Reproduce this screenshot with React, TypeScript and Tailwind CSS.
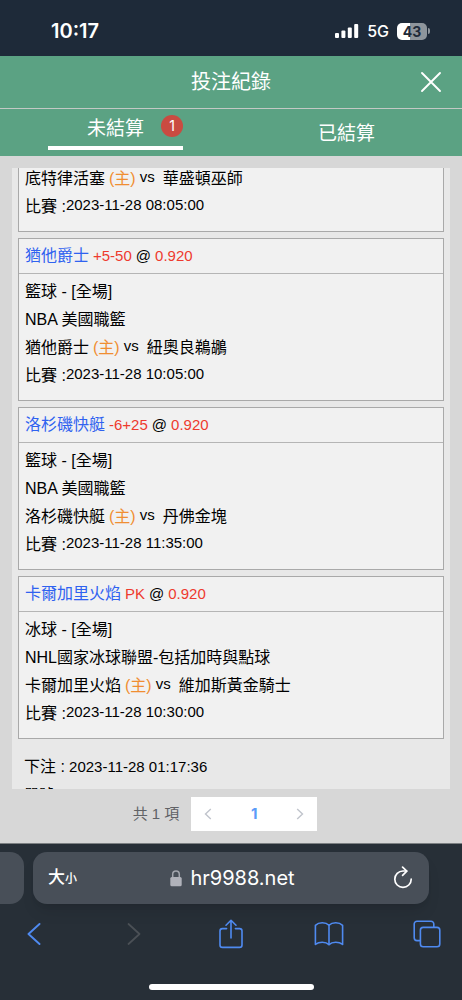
import React, { useState } from 'react';
import clsx from 'clsx';

type Bet = {
  id: number;
  pick?: string;
  line?: string;
  odds?: string;
  sport?: string;
  league?: string;
  home: string;
  away: string;
  startsAt: string;
};

const bets: Bet[] = [
  { id: 1, home: '底特律活塞', away: '華盛頓巫師', startsAt: '2023-11-28 08:05:00' },
  {
    id: 2,
    pick: '猶他爵士',
    line: '+5-50',
    odds: '0.920',
    sport: '籃球 - [全場]',
    league: 'NBA 美國職籃',
    home: '猶他爵士',
    away: '紐奧良鵜鶘',
    startsAt: '2023-11-28 10:05:00',
  },
  {
    id: 3,
    pick: '洛杉磯快艇',
    line: '-6+25',
    odds: '0.920',
    sport: '籃球 - [全場]',
    league: 'NBA 美國職籃',
    home: '洛杉磯快艇',
    away: '丹佛金塊',
    startsAt: '2023-11-28 11:35:00',
  },
  {
    id: 4,
    pick: '卡爾加里火焰',
    line: 'PK',
    odds: '0.920',
    sport: '冰球 - [全場]',
    league: 'NHL國家冰球聯盟-包括加時與點球',
    home: '卡爾加里火焰',
    away: '維加斯黃金騎士',
    startsAt: '2023-11-28 10:30:00',
  },
];

const StatusBar: React.FC = () => (
  <div className="flex h-14 shrink-0 items-center justify-between bg-[#1e2a39] pt-1.5 pr-8 pl-[51px] text-white">
    <span className="text-[20px] leading-6 font-semibold">10:17</span>
    <div className="flex items-center gap-2">
      <svg width="24" height="16" viewBox="0 0 24 16" fill="currentColor" aria-hidden="true">
        <rect x="0" y="10" width="4" height="5" rx="1" />
        <rect x="6.4" y="7.5" width="4" height="7.5" rx="1" />
        <rect x="12.8" y="4.5" width="4" height="10.5" rx="1" />
        <rect x="19.2" y="1" width="4" height="14" rx="1" />
      </svg>
      <span className="text-[16px] leading-6 font-medium">5G</span>
      <div className="flex items-center">
        <div className="h-[17px] w-[30px] rounded-[5px] bg-linear-to-r from-white from-43% to-[#8e959c] to-43% text-center text-[14px] leading-[17px] font-bold text-[#1e2a39]">
          43
        </div>
        <div className="ml-px h-1.5 w-0.5 rounded-r-full bg-[#8e959c]" />
      </div>
    </div>
  </div>
);

const BetCard: React.FC<{ bet: Bet }> = ({ bet }) => (
  <article className={clsx('border border-[#a9a9a9] bg-[#f1f1f1]', !bet.pick && 'border-t-0')}>
    {bet.pick && (
      <h2 className="flex h-[35px] items-center gap-1 border-b border-[#b5b5b5] px-1.5 text-[15px]">
        <span className="text-[16px] text-[#2f62f0]">{bet.pick}</span>
        <span className="text-[#ee3a2e]">{bet.line}</span>
        <span>@</span>
        <span className="text-[#ee3a2e]">{bet.odds}</span>
      </h2>
    )}
    <div className={clsx('px-1.5 pb-2.5 text-[16px] leading-7', bet.pick ? 'pt-1' : '-mt-[3px]')}>
      {bet.sport && <p>{bet.sport}</p>}
      {bet.league && <p>{bet.league}</p>}
      <p className="flex h-7">
        <span>{bet.home}</span>
        <span className="ml-1 text-[#f08e32]">(主)</span>
        <span className="mr-2 ml-1 text-[15px] leading-6">vs</span>
        <span>{bet.away}</span>
      </p>
      <p className="flex h-7">
        <span>比賽 :</span>
        <time className="text-[15px] leading-6">{bet.startsAt}</time>
      </p>
    </div>
  </article>
);

const BrowserBar: React.FC = () => (
  <footer className="shrink-0 border-t border-[#7c8082] bg-[#272f37] pt-2 text-white">
    <div className="flex gap-[9px] pr-[33px]">
      <div className="h-[52px] w-6 shrink-0 rounded-r-[14px] bg-[#484f58]" />
      <div className="flex h-[52px] flex-1 items-center justify-between rounded-[14px] bg-[#484f58] pr-4 pl-[15px] shadow-lg">
        <button type="button" aria-label="大小" className="flex w-8 items-baseline font-medium">
          <span className="text-[17px]">大</span>
          <span className="text-[12px]">小</span>
        </button>
        <a href="#" className="flex items-center gap-2 pl-1 text-[20px]">
          <svg width="12" height="17" viewBox="0 0 12 17" aria-hidden="true">
            <path d="M2.7 8V4.4a3.3 3.3 0 0 1 6.6 0V8" fill="none" stroke="#a3a6ae" strokeWidth="1.5" />
            <rect x="0.3" y="7" width="11.4" height="9.3" rx="1.6" fill="#b0b2ba" />
          </svg>
          hr9988.net
        </a>
        <button type="button" aria-label="重新載入" className="flex w-8 justify-end">
          <svg width="20" height="24" viewBox="0 0 20 24" fill="none" stroke="currentColor" strokeWidth="1.7" strokeLinecap="round" strokeLinejoin="round">
            <path d="M18.2 13.2a8.2 8.2 0 1 1-8.2-8.2h3.6" />
            <path d="M9.6 1.2l4.2 3.9-4.2 4.2" />
          </svg>
        </button>
      </div>
    </div>
    <nav className="mt-3 flex h-9 items-center justify-between pr-[21px] pl-[27px] text-[#4f8af0]">
      <button type="button" aria-label="上一頁">
        <svg width="14" height="22" viewBox="0 0 14 22" fill="none" stroke="currentColor" strokeWidth="1.9" strokeLinecap="round" strokeLinejoin="round">
          <path d="M12.5 1L1.500 11l11 10" />
        </svg>
      </button>
      <button type="button" aria-label="下一頁" disabled className="pl-4 text-[#4b5056]">
        <svg width="14" height="22" viewBox="0 0 14 22" fill="none" stroke="currentColor" strokeWidth="1.7" strokeLinecap="round" strokeLinejoin="round">
          <path d="M1.5 1l11 10-11 10" />
        </svg>
      </button>
      <button type="button" aria-label="分享" className="pl-2">
        <svg width="26" height="30" viewBox="0 0 26 30" fill="none" stroke="currentColor" strokeWidth="1.6" strokeLinecap="round" strokeLinejoin="round">
          <path d="M8.6 9.6H4.4a2.4 2.4 0 0 0-2.4 2.4v14a2.4 2.4 0 0 0 2.4 2.4h17.2A2.4 2.4 0 0 0 24 26V12a2.4 2.4 0 0 0-2.4-2.4h-4.2" />
          <path d="M13 19V1.4M8 6.2l5-4.9 5 4.9" />
        </svg>
      </button>
      <button type="button" aria-label="書籤">
        <svg width="30" height="26" viewBox="0 0 30 26" fill="none" stroke="currentColor" strokeWidth="1.6" strokeLinecap="round" strokeLinejoin="round">
          <path d="M15 4.2C13.4 2.6 11.2 1.8 8.3 1.8c-3.2 0-5.3 1-6.9 2.6v19c1.8-1.4 4.1-2.2 6.9-2.2 2.9 0 5.1.8 6.7 2.4 1.6-1.6 3.8-2.4 6.7-2.4 2.8 0 5.1.8 6.9 2.2v-19c-1.6-1.6-3.7-2.6-6.9-2.6-2.9 0-5.1.8-6.7 2.4z" />
          <path d="M15 4.2v19.2" />
        </svg>
      </button>
      <button type="button" aria-label="分頁">
        <svg width="28" height="28" viewBox="0 0 28 28" fill="none" stroke="currentColor" strokeWidth="1.6" strokeLinecap="round" strokeLinejoin="round">
          <path d="M7 20.6H4a2.8 2.8 0 0 1-2.8-2.8V4A2.8 2.8 0 0 1 4 1.2h14A2.8 2.8 0 0 1 20.8 4v3" />
          <rect x="7.4" y="7.4" width="19.4" height="19.4" rx="2.8" />
        </svg>
      </button>
    </nav>
    <div className="mx-auto mt-8 mb-2.5 h-1.5 w-[165px] rounded-full bg-white" />
  </footer>
);

const App: React.FC = () => {
  const [tab, setTab] = useState<'open' | 'settled'>('open');

  return (
    <div className="flex h-screen flex-col bg-[#d7d7d7] font-['Inter','Noto_Sans_CJK_TC',sans-serif]">
      <StatusBar />
      <header className="shrink-0 bg-[#5ba283] text-white">
        <div className="grid h-[53px] grid-cols-[1fr_auto_1fr] items-center border-b border-[#c3c9c5] px-5">
          <h1 className="col-start-2 text-[20px] leading-7">投注紀錄</h1>
          <button type="button" aria-label="關閉" className="justify-self-end">
            <svg width="22" height="22" viewBox="0 0 22 22" fill="none" stroke="currentColor" strokeWidth="1.9" strokeLinecap="round">
              <path d="M2 2l18 18M20 2L2 20" />
            </svg>
          </button>
        </div>
        <div className="grid h-[47px] grid-cols-2 text-[19px]">
          <button
            type="button"
            onClick={() => setTab('open')}
            className={clsx(
              'relative mb-1.5 w-[135px] justify-self-center border-b-4 pt-1',
              tab === 'open' ? 'border-white' : 'border-transparent',
            )}
          >
            未結算
            <span className="absolute top-1.5 right-0 size-[22px] rounded-full bg-[#c94b41] text-[14px] leading-[22px]">
              1
            </span>
          </button>
          <button
            type="button"
            onClick={() => setTab('settled')}
            className={clsx('w-[135px] justify-self-center pt-1', tab === 'settled' && 'border-b-4 border-white')}
          >
            已結算
          </button>
        </div>
      </header>

      <main className="mx-3 mt-3 min-h-0 flex-1 overflow-y-auto bg-[#e8e8e8] px-1.5 font-['Liberation_Sans','Noto_Sans_CJK_TC',sans-serif] text-black [scrollbar-width:none]">
        <div className="flex flex-col gap-1.5">
          {bets.map(bet => (
            <BetCard key={bet.id} bet={bet} />
          ))}
        </div>
        <div className="px-1.5 pt-3.5 text-[15px] leading-7">
          <p>
            <span className="text-[16px]">下注 :</span> 2023-11-28 01:17:36
          </p>
          <p>單號 :</p>
        </div>
      </main>

      <div className="flex shrink-0 items-center justify-center gap-3 pt-2 pr-3 pb-3 font-['Liberation_Sans','Noto_Sans_CJK_TC',sans-serif]">
        <span className="text-[15px] text-[#606266]">共 1 項</span>
        <div className="grid h-[34px] w-[126px] grid-cols-3 bg-white text-[#c0c4cc]">
          <button type="button" aria-label="上一頁" disabled className="flex items-center justify-center pr-2">
            <svg width="8" height="12" viewBox="0 0 8 12" fill="none" stroke="currentColor" strokeWidth="1.4">
              <path d="M6.8 1L1.5 6l5.3 5" />
            </svg>
          </button>
          <button type="button" className="font-['Inter',sans-serif] text-[15px] font-bold text-[#5b9cf8]">
            1
          </button>
          <button type="button" aria-label="下一頁" disabled className="flex items-center justify-center pl-2">
            <svg width="8" height="12" viewBox="0 0 8 12" fill="none" stroke="currentColor" strokeWidth="1.4">
              <path d="M1.2 1l5.3 5-5.3 5" />
            </svg>
          </button>
        </div>
      </div>
      <BrowserBar />
    </div>
  );
};

export default App;
